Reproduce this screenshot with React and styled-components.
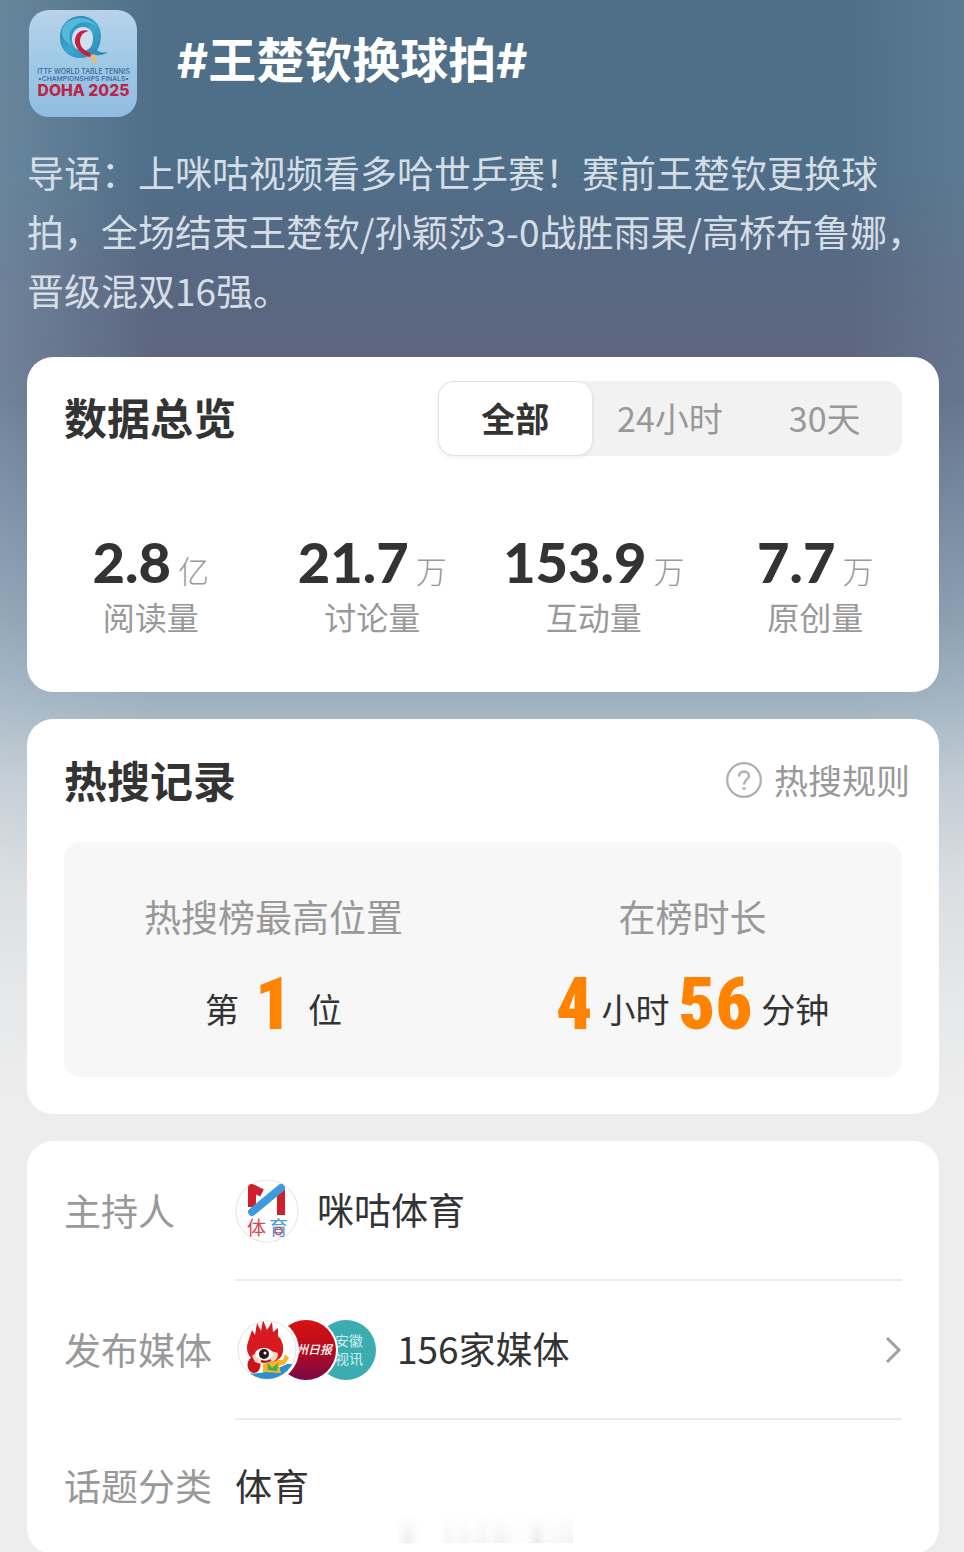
import styled, { createGlobalStyle } from "styled-components"

const GlobalStyle = createGlobalStyle`
    * {
        box-sizing: border-box;
    }

    body {
        margin: 0;
        background-color: #ededed;
        font-family: "Noto Sans CJK SC", sans-serif;
        color: #333;
    }

    h1, h2, p, dl, dt, dd {
        margin: 0;
        font-weight: 400;
    }

    button {
        border: 0;
        padding: 0;
        background: none;
        font: inherit;
        cursor: pointer;
    }

    a {
        color: inherit;
        text-decoration: none;
    }
`

const Page = styled.main`
    min-height: 100vh;
    padding: 10px 25px 0 27px;
    background:
        linear-gradient(180deg, rgba(237, 237, 237, 0) 400px, rgba(237, 237, 237, 0.12) 500px, rgba(237, 237, 237, 0.28) 620px, rgba(237, 237, 237, 0.45) 700px, rgba(237, 237, 237, 0.68) 780px, rgba(237, 237, 237, 0.85) 880px, rgba(237, 237, 237, 0.95) 1000px, #ededed 1100px),
        linear-gradient(90deg, rgba(140, 170, 190, 0.4), rgba(140, 170, 190, 0) 16%, rgba(140, 170, 190, 0) 88%, rgba(140, 170, 190, 0.2)),
        linear-gradient(180deg, #4f6f88 0, #4f6e88 170px, #586882 270px, #5d6680 350px, #5d6f88 480px, #5f7f99 700px);
`

const Header = styled.header`
    display: flex;
    align-items: flex-start;
    gap: 40px;
    padding-left: 2px;
`

const Cover = styled.svg`
    width: 108px;
    height: 107px;
    flex-shrink: 0;
`

const Topic = styled.h1`
    padding-top: 16px;
    font-family: Inter, "Noto Sans CJK SC", sans-serif;
    font-size: 48px;
    line-height: 70px;
    font-weight: 700;
    color: #fff;
`

const Intro = styled.p`
    margin-top: 26px;
    padding-bottom: 10px;
    font-size: 37px;
    line-height: 59px;
    color: #d5dde6;
`

const Card = styled.section`
    margin-top: 27px;
    padding: ${props => props.$padding};
    border-radius: 26px;
    background-color: #fff;
`

const CardHead = styled.div`
    display: flex;
    align-items: flex-start;
    justify-content: space-between;
`

const CardTitle = styled.h2`
    font-size: 43px;
    line-height: 70px;
    font-weight: 700;
`

const Segments = styled.div`
    display: grid;
    grid-template-columns: repeat(3, 1fr);
    width: 464px;
    border-radius: 16px;
    background-color: #f2f2f2;
`

const Segment = styled.button`
    height: 75px;
    padding-bottom: 2px;
    border-radius: 16px;
    font-size: 34px;
    font-weight: ${props => (props.$active ? 700 : 400)};
    color: ${props => (props.$active ? "#333" : "#999")};
    background-color: ${props => (props.$active ? "#fff" : "transparent")};
    box-shadow: ${props => (props.$active ? "inset 0 0 0 1px #e2e2e2, 0 2px 4px rgba(0, 0, 0, 0.06)" : "none")};
`

const Stats = styled.dl`
    display: grid;
    grid-template-columns: repeat(4, 1fr);
    margin: 80px -24px 0;
`

const Stat = styled.div`
    display: flex;
    flex-direction: column-reverse;
    align-items: center;
`

const StatValue = styled.dd`
    display: flex;
    align-items: baseline;
    gap: 7px;
    line-height: 52px;
    white-space: nowrap;
`

const StatNumber = styled.span`
    font-family: Lato, sans-serif;
    font-size: 56px;
    font-weight: 900;
`

const StatUnit = styled.span`
    font-size: 31px;
    font-weight: 300;
    color: #999;
`

const StatLabel = styled.dt`
    font-size: 32px;
    line-height: 40px;
    color: #999;
`

const Rules = styled.a`
    display: flex;
    align-items: center;
    gap: 12px;
    font-size: 34px;
    line-height: 72px;
    color: #999;
`

const Record = styled.dl`
    display: grid;
    grid-template-columns: repeat(2, 1fr);
    margin: 26px 8px 0 0;
    padding: 45px 0 30px;
    border-radius: 16px;
    background-color: #f7f7f7;
    text-align: center;
`

const RecordLabel = styled.dt`
    font-size: 37px;
    line-height: 59px;
    color: #999;
`

const RecordValue = styled.dd`
    display: flex;
    align-items: center;
    justify-content: center;
    gap: ${props => props.$gap};
    height: 84px;
    margin-top: 17px;
    font-size: 34px;
    line-height: 60px;
`

const Highlight = styled.span`
    font-family: "Roboto Condensed", "Liberation Sans Narrow", sans-serif;
    font-size: 72px;
    font-weight: 900;
    color: #ff8200;
`

const RecordWord = styled.span`
    padding-top: 8px;
`

const Row = styled.div`
    display: grid;
    grid-template-columns: 171px 1fr;
    align-items: center;
    font-size: 37px;
`

const RowLabel = styled.dt`
    padding-bottom: 4px;
    color: #999;
`

const RowValue = styled.dd`
    display: flex;
    align-items: center;
    gap: 18px;
    height: ${props => (props.$last ? "134px" : "139px")};
    border-bottom: ${props => (props.$last ? "0" : "2px solid #ebebeb")};
`

const RowText = styled.span`
    flex: 1;
    padding-bottom: 4px;
`

const Avatar = styled.svg`
    width: 64px;
    height: 64px;
`

const MediaLink = styled.a`
    display: flex;
    flex: 1;
    align-items: center;
    gap: 18px;
`

const Faces = styled.svg`
    width: 144px;
    height: 64px;
`

const DetailsCard = styled(Card)`
    background-image:
        linear-gradient(180deg, #fff, rgba(255, 255, 255, 0)),
        linear-gradient(90deg, #fff 2%, #ededed 8%, #fff 14%, #fff 26%, #f6f6f6 30%, #fafafa 36%, #f4f4f4 40%, #fcfcfc 44%, #f3f3f3 50%, #fbfbfb 54%, #f3f3f3 60%, #fdfdfd 68%, #fbfbfb 75%, #eaeaea 80%, #fbfbfb 85%, #f3f3f3 99%);
    background-size: 180px 28px;
    background-position: center bottom 11px;
    background-repeat: no-repeat;
`

const stats = [
  { label: "阅读量", number: "2.8", unit: "亿" },
  { label: "讨论量", number: "21.7", unit: "万" },
  { label: "互动量", number: "153.9", unit: "万" },
  { label: "原创量", number: "7.7", unit: "万" },
]

const ranges = ["全部", "24小时", "30天"]

const TopicCover = () => (
  <Cover viewBox="0 0 108 107" role="img" aria-label="Doha 2025">
    <defs>
      <linearGradient id="sky" x1="0" y1="0" x2="0" y2="1">
        <stop offset="0" stopColor="#b9d2ea" />
        <stop offset="0.4" stopColor="#a3cbe8" />
        <stop offset="1" stopColor="#8fbce0" />
      </linearGradient>
      <linearGradient id="ring" x1="0" y1="0" x2="1" y2="1">
        <stop offset="0" stopColor="#1f7fae" />
        <stop offset="0.5" stopColor="#3ba6cf" />
        <stop offset="1" stopColor="#2a7da5" />
      </linearGradient>
    </defs>
    <rect width="108" height="107" rx="20" fill="url(#sky)" />
    <ellipse cx="53" cy="28" rx="12" ry="14" fill="#cfe0f0" />
    <path fillRule="evenodd" fill="url(#ring)" d="M52 6C64 6 72 15 72 26C72 32 70 37 68 40C71 43 75 43 79 42C74 46 66 46 62 44C59 47 55 48 51 48C39 48 31 39 31 27C31 15 40 6 52 6ZM54 17C47 17 43 22 43 29C43 36 48 41 54 41C60 41 64 36 64 28C64 21 60 17 54 17Z" />
    <path fill="#56b9dc" d="M36 14C45 5 61 6 68 17C61 11 52 11 46 16C40 21 39 28 42 35C33 30 30 22 36 14Z" />
    <path fill="#c4203f" d="M60 21C51 18 45 25 46 33C48 41 55 46 64 48L61 43C55 40 51 37 51 31C51 26 54 22 60 21Z" />
    <path fill="#e4bd7d" d="M61 46L66 44L68 51L64 54Z" />
    <g fontFamily="Inter, sans-serif" textAnchor="middle">
      <text x="54.500" y="63.500" fontSize="6.900" fontWeight="500" fill="#38699a">ITTF WORLD TABLE TENNIS</text>
      <text x="54.500" y="71" fontSize="6.800" fontWeight="500" fill="#38699a">•CHAMPIONSHIPS FINALS•</text>
      <text x="54.500" y="86" fontSize="15.700" fontWeight="800" fill="#bd2548">DOHA 2025</text>
    </g>
  </Cover>
)

const QuestionIcon = () => (
  <svg width="36" height="36" viewBox="0 0 36 36" fill="none" stroke="#b0b0b0" strokeWidth="2.200" aria-hidden="true">
    <circle cx="18" cy="18" r="16.800" />
    <path d="M13 14.500C13 11.500 15 9.500 18 9.500S23 11.400 23 14C23 17.500 18 17.600 18 22.500" strokeWidth="2.400" />
    <circle cx="18" cy="26.500" r="1.600" fill="#b0b0b0" stroke="none" />
  </svg>
)

const HostAvatar = () => (
  <Avatar viewBox="0 0 64 64" aria-hidden="true">
    <circle cx="32" cy="32" r="31" fill="#fff" stroke="#e8e8e8" strokeWidth="1.200" />
    <path d="M17 28V9L27 14" fill="none" stroke="#cf1f2c" strokeWidth="8" strokeLinejoin="round" />
    <path d="M46 36V9" stroke="#cf1f2c" strokeWidth="8" />
    <path d="M17 33L46 9" stroke="#3d9add" strokeWidth="8" strokeLinecap="round" />
    <text x="12" y="56" fontSize="19" fill="#d9444e">体</text>
    <text x="34" y="56" fontSize="19" fill="#4c9dd8">育</text>
    <circle cx="43.500" cy="52" r="3.500" fill="none" stroke="#d9444e" strokeWidth="1.500" />
  </Avatar>
)

const MediaFaces = () => (
  <Faces viewBox="0 0 144 64" aria-hidden="true">
    <defs>
      <linearGradient id="daily" x1="0" y1="0" x2="0" y2="1">
        <stop offset="0" stopColor="#da100f" />
        <stop offset="0.450" stopColor="#b90d1c" />
        <stop offset="1" stopColor="#7c0747" />
      </linearGradient>
      <clipPath id="mascot">
        <circle cx="32" cy="32" r="29" />
      </clipPath>
    </defs>
    <circle cx="111" cy="32" r="30" fill="#3badb1" />
    <g fill="#cdf0ef" fontSize="14">
      <text x="100" y="28">安徽</text>
      <text x="100" y="46">视讯</text>
    </g>
    <circle cx="71" cy="32" r="32" fill="#fff" />
    <circle cx="71" cy="32" r="30" fill="url(#daily)" />
    <text x="61" y="36" fontSize="12" fontStyle="italic" fontWeight="500" fill="#fff">州日报</text>
    <circle cx="32" cy="32" r="32" fill="#fff" />
    <circle cx="32" cy="32" r="29" fill="#fff" stroke="#e2e2e2" />
    <g clipPath="url(#mascot)">
      <path fill="#2c8fd2" d="M10 55Q28 58 52 46L62 46L50 64H12Z" />
      <path fill="#f2b822" d="M28 44L42 42L48 42L50 36L54 40L50 46L44 48L46 55L28 54Z" />
      <path fill="#4aa657" d="M32 44L37 50L43 45L42 53L33 52Z" />
      <path fill="#d91920" d="M13 24L17 12L20 17L22 5L26 13L28 2L32 12L37 4L38 14L43 10L43 18C49 23 50 35 45 40C39 46 22 47 16 40C12 36 11 29 13 24Z" />
      <ellipse cx="19" cy="47" rx="6.500" ry="8" fill="#c9121b" />
      <path fill="#fbd8bd" d="M17 38Q28 30 43 35Q43 41 39 43Q28 48 20 44Z" />
      <ellipse cx="29" cy="36" rx="9" ry="6" fill="#fff" />
      <circle cx="29" cy="36" r="5" fill="#241818" />
      <circle cx="30" cy="35" r="1.500" fill="#fff" />
      <path d="M26 43Q31 45 36 42" stroke="#a51219" strokeWidth="2" fill="none" />
    </g>
  </Faces>
)

const ChevronIcon = () => (
  <svg width="18" height="28" viewBox="0 0 18 28" fill="none" stroke="#a0a0a0" strokeWidth="3" aria-hidden="true">
    <path d="M3 2L15 14L3 26" />
  </svg>
)

const Overview = () => (
  <Card $padding="24px 37px 56px">
    <CardHead>
      <CardTitle>数据总览</CardTitle>
      <Segments>
        {ranges.map((range, i) => <Segment key={range} type="button" $active={i === 0} aria-pressed={i === 0}>{range}</Segment>)}
      </Segments>
    </CardHead>
    <Stats>
      {stats.map(stat => (
        <Stat key={stat.label}>
          <StatLabel>{stat.label}</StatLabel>
          <StatValue>
            <StatNumber>{stat.number}</StatNumber>
            <StatUnit>{stat.unit}</StatUnit>
          </StatValue>
        </Stat>
      ))}
    </Stats>
  </Card>
)

const HotSearch = () => (
  <Card $padding="25px 29px 37px 37px">
    <CardHead>
      <CardTitle>热搜记录</CardTitle>
      <Rules href="#rules"><QuestionIcon />热搜规则</Rules>
    </CardHead>
    <Record>
      <div>
        <RecordLabel>热搜榜最高位置</RecordLabel>
        <RecordValue $gap="16px">
          <RecordWord>第</RecordWord>
          <Highlight>1</Highlight>
          <RecordWord>位</RecordWord>
        </RecordValue>
      </div>
      <div>
        <RecordLabel>在榜时长</RecordLabel>
        <RecordValue $gap="9px">
          <Highlight>4</Highlight>
          <RecordWord>小时</RecordWord>
          <Highlight>56</Highlight>
          <RecordWord>分钟</RecordWord>
        </RecordValue>
      </div>
    </Record>
  </Card>
)

const Details = () => (
  <DetailsCard as="dl" $padding="1px 37px 0">
    <Row>
      <RowLabel>主持人</RowLabel>
      <RowValue><HostAvatar /><RowText>咪咕体育</RowText></RowValue>
    </Row>
    <Row>
      <RowLabel>发布媒体</RowLabel>
      <RowValue>
        <MediaLink href="#media">
          <MediaFaces />
          <RowText>156家媒体</RowText>
          <ChevronIcon />
        </MediaLink>
      </RowValue>
    </Row>
    <Row>
      <RowLabel>话题分类</RowLabel>
      <RowValue $last><RowText>体育</RowText></RowValue>
    </Row>
  </DetailsCard>
)

const App = () => {
  return (
    <>
      <GlobalStyle />
      <Page>
        <Header>
          <TopicCover />
          <Topic>#王楚钦换球拍#</Topic>
        </Header>
        <Intro>导语：上咪咕视频看多哈世乒赛！赛前王楚钦更换球拍，全场结束王楚钦/孙颖莎3-0战胜雨果/高桥布鲁娜，晋级混双16强。</Intro>
        <Overview />
        <HotSearch />
        <Details />
      </Page>
    </>
  )
}

export default App
